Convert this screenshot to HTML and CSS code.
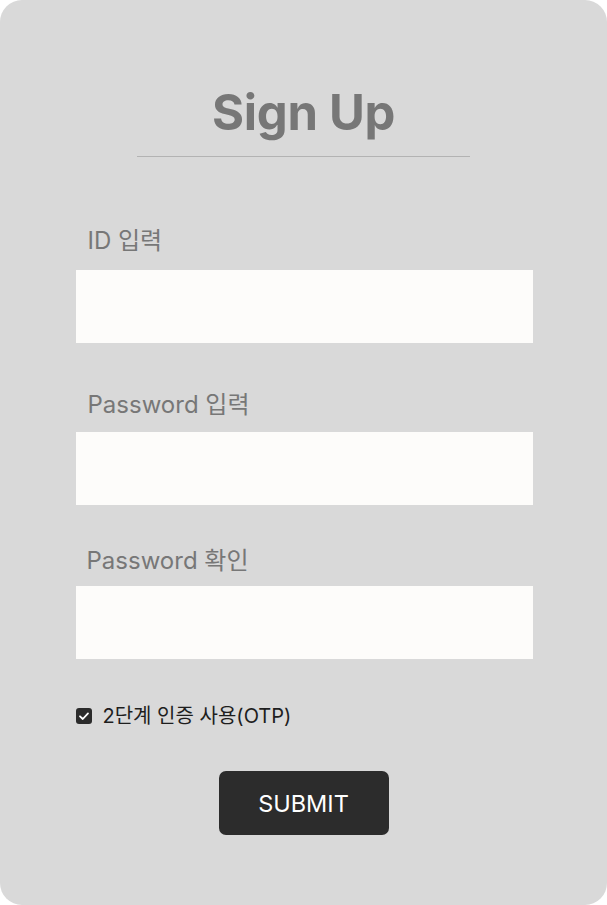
FILE: index.html
```html
<!DOCTYPE html>
<html lang="ko">
<head>
<meta charset="utf-8">
<link rel="stylesheet" href="styles.css">
</head>
<body>
<main class="card">
  <h1 class="title">Sign Up</h1>
  <hr class="divider">
  <form class="form">
    <div class="field field-1">
      <label class="label">ID 입력</label>
      <input class="input" type="text">
    </div>
    <div class="field field-2">
      <label class="label">Password 입력</label>
      <input class="input" type="password">
    </div>
    <div class="field field-3">
      <label class="label label-3">Password 확인</label>
      <input class="input" type="password">
    </div>
    <label class="check-row">
      <span class="checkbox">
        <svg viewBox="0 0 16 16" width="16" height="16"><path d="M4 8.3 L6.8 11 L12 5.4" fill="none" stroke="#ffffff" stroke-width="1.8" stroke-linecap="round" stroke-linejoin="round"/></svg>
      </span>
      <span class="check-text">2단계 인증 사용(OTP)</span>
    </label>
    <div class="actions">
      <button class="submit" type="button">SUBMIT</button>
    </div>
  </form>
</main>
</body>
</html>
```
FILE: styles.css
```css
html, body {
  margin: 0;
  padding: 0;
  background: #ffffff;
}
body {
  font-family: Inter, "Noto Sans CJK KR", sans-serif;
}
.card {
  box-sizing: border-box;
  width: 607px;
  height: 905px;
  background: #d9d9d9;
  border-radius: 22px;
  padding-top: 84px;
  display: flex;
  flex-direction: column;
  align-items: center;
}
.title {
  margin: 0;
  font-size: 49px;
  line-height: 58px;
  font-weight: 700;
  color: #777777;
  letter-spacing: -0.3px;
}
.divider {
  width: 333px;
  margin: 14px 0 0 0;
  border: none;
  border-top: 1px solid #b3b3b3;
  height: 0;
}
.form {
  width: 457px;
  margin: 69px 0 0 1px;
  display: flex;
  flex-direction: column;
}
.field {
  display: flex;
  flex-direction: column;
}
.field-1 .label { margin-bottom: 14px; }
.field-2 { margin-top: 47px; }
.field-2 .label { margin-bottom: 12px; }
.field-3 { margin-top: 41px; }
.field-3 .label { margin-bottom: 10px; }
.label {
  font-size: 24px;
  line-height: 30px;
  color: #777777;
  padding-left: 12px;
}
.label-3 { padding-left: 11px; }
.input {
  box-sizing: border-box;
  width: 457px;
  height: 73px;
  border: none;
  background: #fdfcfa;
  margin: 0;
  padding: 0 14px;
  font-family: inherit;
  font-size: 20px;
  outline: none;
}
.check-row {
  margin-top: 45px;
  display: flex;
  align-items: center;
  height: 24px;
  gap: 11px;
}
.checkbox {
  width: 16px;
  height: 16px;
  border-radius: 3px;
  background: #2b2b2b;
  display: flex;
}
.check-text {
  font-size: 20px;
  line-height: 24px;
  color: #1e1e1e;
}
.actions {
  margin-top: 43px;
  display: flex;
  justify-content: center;
}
.submit {
  width: 170px;
  height: 64px;
  border: none;
  border-radius: 7px;
  background: #2c2c2c;
  color: #ffffff;
  font-family: Inter, sans-serif;
  font-size: 23.5px;
  font-weight: 400;
  margin-left: -1px;
}
```
